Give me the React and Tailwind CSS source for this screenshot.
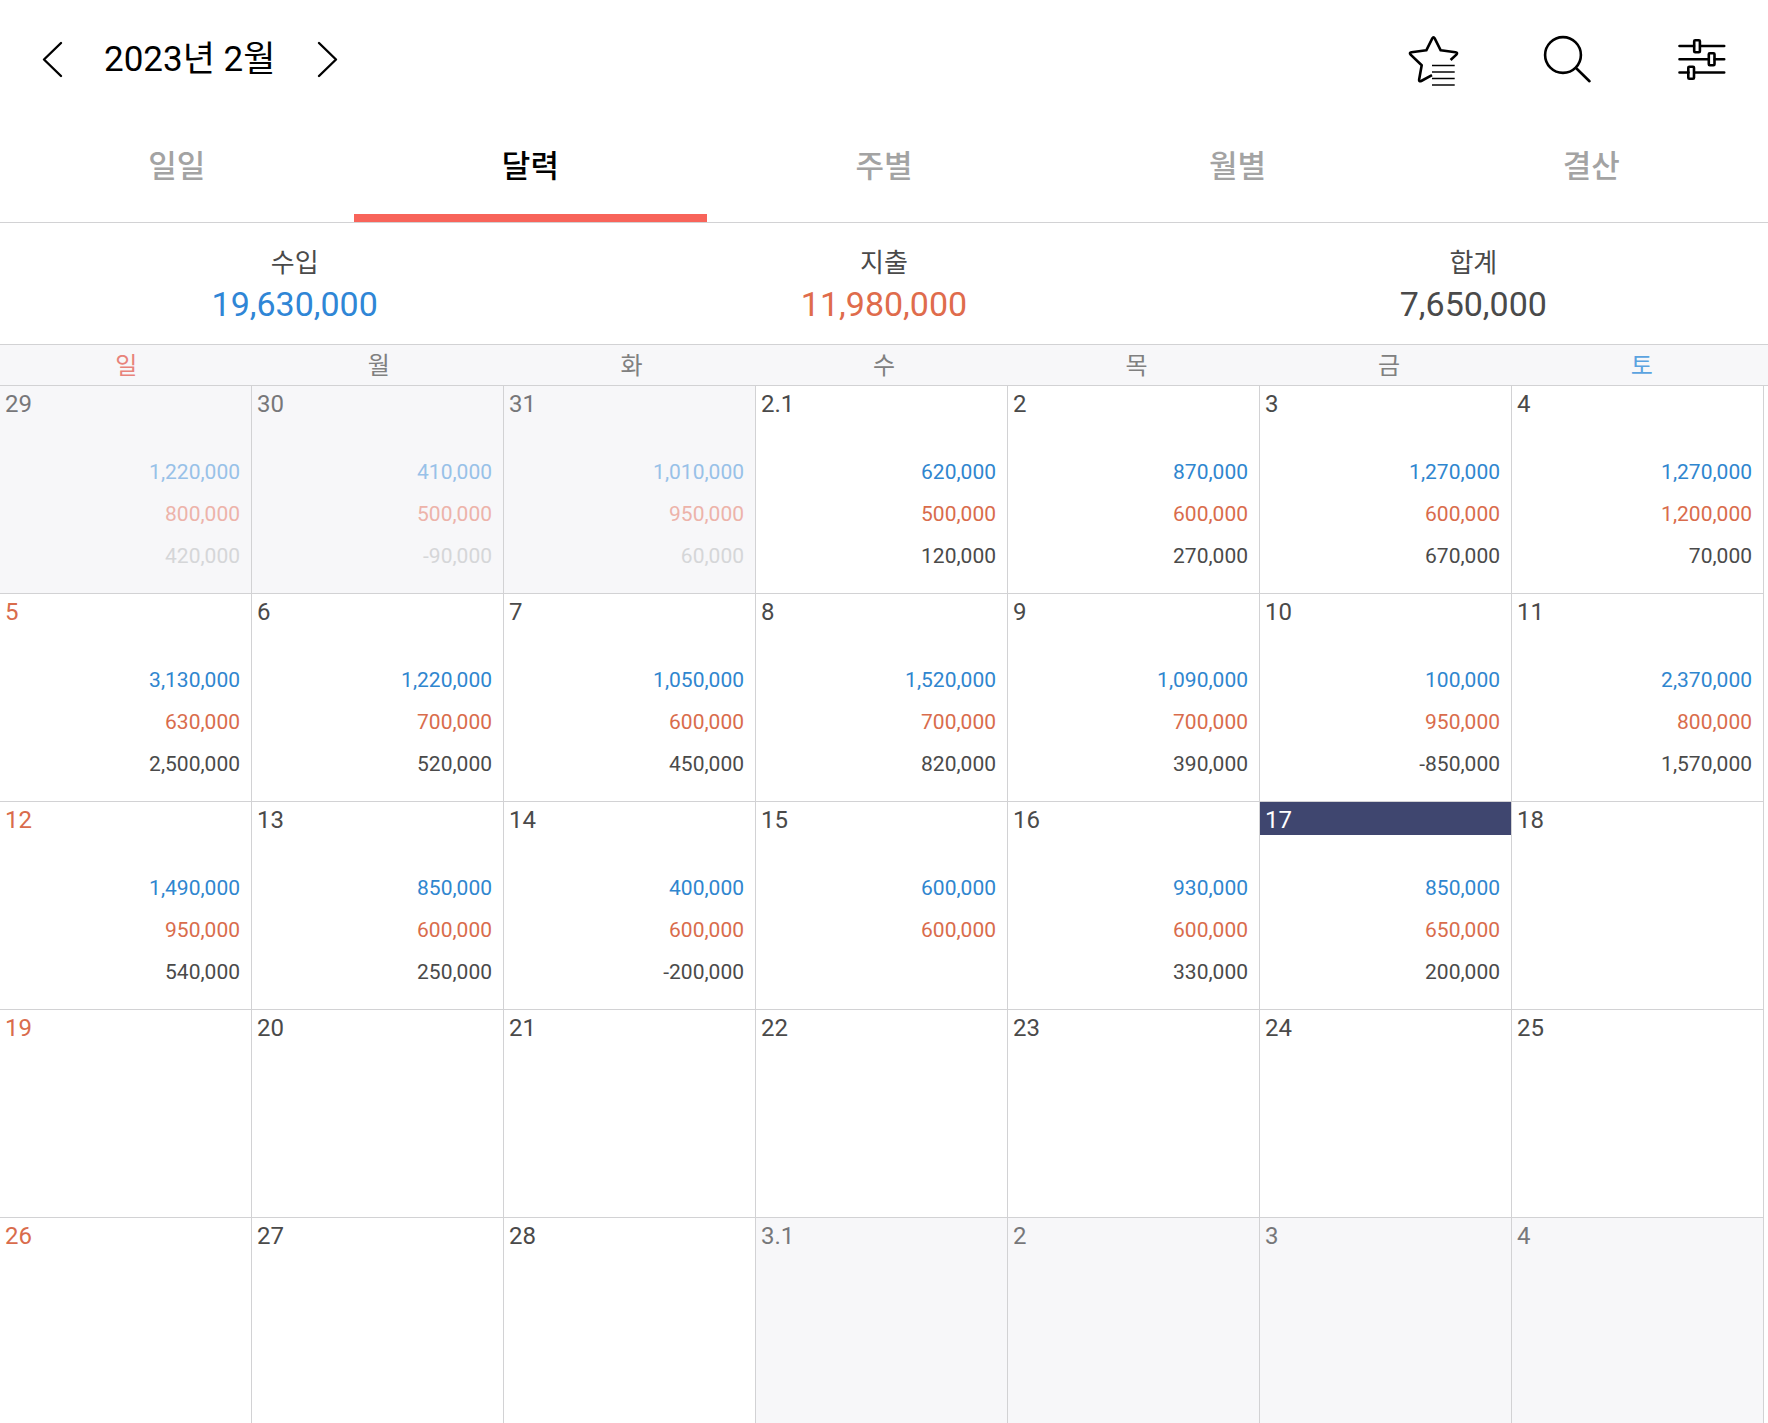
import React, { useState } from 'react';
import clsx from 'clsx';

const TABS = ['일일', '달력', '주별', '월별', '결산'];

const SUMMARY = [
  { label: '수입', value: '19,630,000', color: 'text-[#2f86d6]' },
  { label: '지출', value: '11,980,000', color: 'text-[#df6c4c]' },
  { label: '합계', value: '7,650,000', color: 'text-[#4a4a4a]' }
];

const WEEKDAYS = [
  { label: '일', color: 'text-[#e8837b]' },
  { label: '월', color: 'text-[#808080]' },
  { label: '화', color: 'text-[#808080]' },
  { label: '수', color: 'text-[#808080]' },
  { label: '목', color: 'text-[#808080]' },
  { label: '금', color: 'text-[#808080]' },
  { label: '토', color: 'text-[#5ba3e0]' }
];

// amounts: [income, expense, total]
const WEEKS = [
  [
    { day: '29', outside: true, amounts: ['1,220,000', '800,000', '420,000'] },
    { day: '30', outside: true, amounts: ['410,000', '500,000', '-90,000'] },
    { day: '31', outside: true, amounts: ['1,010,000', '950,000', '60,000'] },
    { day: '2.1', amounts: ['620,000', '500,000', '120,000'] },
    { day: '2', amounts: ['870,000', '600,000', '270,000'] },
    { day: '3', amounts: ['1,270,000', '600,000', '670,000'] },
    { day: '4', amounts: ['1,270,000', '1,200,000', '70,000'] }
  ],
  [
    { day: '5', amounts: ['3,130,000', '630,000', '2,500,000'] },
    { day: '6', amounts: ['1,220,000', '700,000', '520,000'] },
    { day: '7', amounts: ['1,050,000', '600,000', '450,000'] },
    { day: '8', amounts: ['1,520,000', '700,000', '820,000'] },
    { day: '9', amounts: ['1,090,000', '700,000', '390,000'] },
    { day: '10', amounts: ['100,000', '950,000', '-850,000'] },
    { day: '11', amounts: ['2,370,000', '800,000', '1,570,000'] }
  ],
  [
    { day: '12', amounts: ['1,490,000', '950,000', '540,000'] },
    { day: '13', amounts: ['850,000', '600,000', '250,000'] },
    { day: '14', amounts: ['400,000', '600,000', '-200,000'] },
    { day: '15', amounts: ['600,000', '600,000'] },
    { day: '16', amounts: ['930,000', '600,000', '330,000'] },
    { day: '17', today: true, amounts: ['850,000', '650,000', '200,000'] },
    { day: '18' }
  ],
  [
    { day: '19' },
    { day: '20' },
    { day: '21' },
    { day: '22' },
    { day: '23' },
    { day: '24' },
    { day: '25' }
  ],
  [
    { day: '26' },
    { day: '27' },
    { day: '28' },
    { day: '3.1', outside: true },
    { day: '2', outside: true },
    { day: '3', outside: true },
    { day: '4', outside: true }
  ]
];

const AMOUNT_COLORS = ['text-[#2f86cf]', 'text-[#d96c4c]', 'text-[#4a4a4a]'];
const OUTSIDE_COLORS = ['text-[#98c1e8]', 'text-[#edb3aa]', 'text-[#d5d6d8]'];

const App = () => {
  const [activeTab, setActiveTab] = useState('달력');

  return (
    <div className="flex h-screen flex-col overflow-hidden bg-white font-[Roboto,'Noto_Sans_CJK_KR',sans-serif] text-[#4a4a4a]">

      {/* Header */}
      <header className="flex h-[120px] shrink-0 items-center justify-between px-10 text-black">
        <div className="flex items-center gap-10">
          <button type="button" aria-label="이전 달">
            <ChevronIcon points="21,3 4,19.500 21,36" />
          </button>
          <h1 className="text-[35px] leading-10">2023년 2월</h1>
          <button type="button" aria-label="다음 달">
            <ChevronIcon points="4,3 21,19.500 4,36" />
          </button>
        </div>
        <div className="flex items-center gap-[82px]">
          <button type="button" aria-label="즐겨찾기"><StarListIcon /></button>
          <button type="button" aria-label="검색"><SearchIcon /></button>
          <button type="button" aria-label="필터"><SlidersIcon /></button>
        </div>
      </header>

      {/* Tabs */}
      <nav className="grid shrink-0 grid-cols-5 border-b border-[#d2d2d4]">
        {TABS.map((tab) => (
          <button
            key={tab}
            type="button"
            onClick={() => setActiveTab(tab)}
            className={clsx(
              'h-[102px] border-b-8 text-[31px] font-medium',
              tab === activeTab ? 'border-[#f8645a] text-black' : 'border-transparent text-[#a3a3a3]'
            )}
          >
            {tab}
          </button>
        ))}
      </nav>

      {/* Monthly totals */}
      <dl className="grid h-[122px] shrink-0 grid-cols-3 border-b border-[#d2d2d4] pt-5 text-center">
        {SUMMARY.map((item) => (
          <div key={item.label}>
            <dt className="text-[26px] leading-10">{item.label}</dt>
            <dd className={clsx('text-[34px] leading-[42px]', item.color)}>{item.value}</dd>
          </div>
        ))}
      </dl>

      {/* Calendar */}
      <table className="block">
        <thead className="block border-b border-[#d2d2d4] bg-[#f7f7f9]">
          <tr className="grid h-10 grid-cols-7">
            {WEEKDAYS.map((weekday) => (
              <th key={weekday.label} className={clsx('text-2xl leading-[42px] font-normal', weekday.color)}>
                {weekday.label}
              </th>
            ))}
          </tr>
        </thead>
        <tbody className="block pr-1">
          {WEEKS.map((week, index) => (
            <tr key={index} className="grid grid-cols-7">
              {week.map((cell, column) => (
                <DayCell key={column} cell={cell} sunday={column === 0} />
              ))}
            </tr>
          ))}
        </tbody>
      </table>
    </div>
  );
};

// Single day with its income, expense and total
const DayCell = ({ cell, sunday }) => {
  const colors = cell.outside ? OUTSIDE_COLORS : AMOUNT_COLORS;

  let dayColor = 'text-[#4a4a4a]';
  if (cell.today) dayColor = 'bg-[#3f466f] text-white';
  else if (cell.outside) dayColor = 'text-[#77777a]';
  else if (sunday) dayColor = 'text-[#d96c4c]';

  return (
    <td className={clsx('h-52 border-r border-b border-[#d2d2d4]', cell.outside && 'bg-[#f7f7f9]')}>
      <div className={clsx('mb-8 pt-[3px] pl-[5px] text-2xl leading-[30px]', dayColor)}>{cell.day}</div>
      {cell.amounts?.map((amount, index) => (
        <div key={index} className={clsx('pr-[11px] text-right text-[21px] leading-[42px]', colors[index])}>
          {amount}
        </div>
      ))}
    </td>
  );
};

const ChevronIcon = ({ points }) => (
  <svg className="h-10 w-6" viewBox="0 0 24 40" fill="none" stroke="currentColor" strokeWidth="2.4" strokeLinecap="round" strokeLinejoin="round">
    <polyline points={points} />
  </svg>
);

const StarListIcon = () => (
  <svg className="size-[52px]" viewBox="0 0 52 52" fill="none" stroke="currentColor" strokeWidth="2.6">
    <path
      d="M42.600 26l5.800-5.400c1.200-1.200.7-2.200-.9-2.400l-14.800-1.900-6-12c-.7-1.300-1.700-1.300-2.400 0l-6 12-14.800 1.900c-1.600.2-2.100 1.200-.9 2.400L13.700 31.300l-2.600 14.400c-.2 1.500.7 2 2.100 1.300L24 41.200"
      strokeLinejoin="round"
    />
    <path d="M24 31.500h22.700M24 44.500h22.700" strokeWidth="1.300" />
    <path d="M24 38h22.700M24 51h22.700" stroke="#444" strokeWidth="2" />
  </svg>
);

const SearchIcon = () => (
  <svg className="size-[52px]" viewBox="0 0 52 52" fill="none" stroke="currentColor" strokeWidth="2.6" strokeLinecap="round">
    <circle cx="21" cy="21" r="17.900" />
    <path d="M34.500 34.500l13 12.700" />
  </svg>
);

const SlidersIcon = () => (
  <svg className="size-[52px]" viewBox="0 0 52 52" fill="none" stroke="currentColor" strokeWidth="2.6" strokeLinecap="round" strokeLinejoin="round">
    <path d="M3.500 12h14.500M24.200 12h24M3.500 25.300h29M38.700 25.300h9.500M3.500 38.500h9M18.500 38.500h29.700" />
    <rect x="18.200" y="6.200" width="5.700" height="12" rx="1" />
    <rect x="32.800" y="19.300" width="5.700" height="12" rx="1" />
    <rect x="12.300" y="32.800" width="5.700" height="12" rx="1" />
  </svg>
);

export default App;
